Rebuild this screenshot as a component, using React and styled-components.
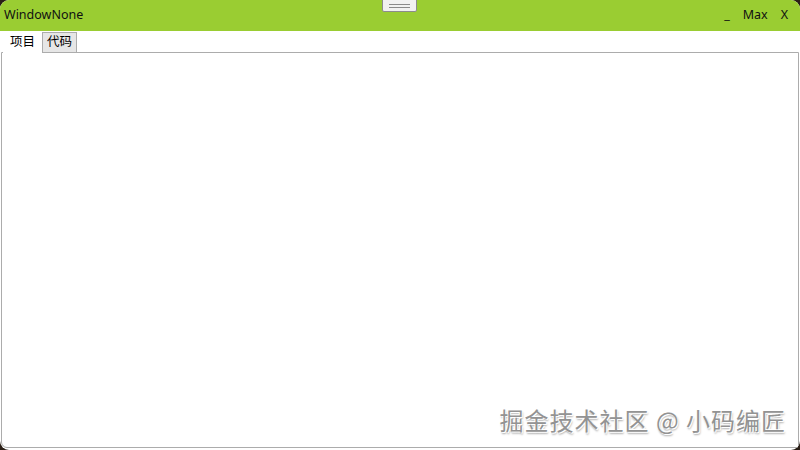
import React from 'react';
import styled, { createGlobalStyle } from 'styled-components';

const GlobalStyle = createGlobalStyle`
  html, body {
    margin: 0;
    padding: 0;
    background: #2a1f16;
  }
  #root {
    width: 800px;
    height: 450px;
  }
`;

const Window = styled.div`
  position: relative;
  width: 800px;
  height: 450px;
  box-sizing: border-box;
  background: #ffffff;
  border-radius: 9px;
  overflow: hidden;
  display: flex;
  flex-direction: column;
  font-family: "Segoe UI", "Noto Sans", "Noto Sans CJK SC", sans-serif;
`;

const TitleBar = styled.div`
  position: relative;
  height: 31px;
  flex: none;
  background: #9acd32;
  display: flex;
  align-items: center;
  padding: 0 12px 0 4px;
  color: #111;
  font-size: 12.5px;
`;

const Title = styled.div`
  flex: 1;
  padding-bottom: 2px;
`;

const Controls = styled.div`
  display: flex;
  gap: 13px;
  align-items: center;
  padding-bottom: 2px;
`;

const Control = styled.span`
  color: #111;
  font-size: 12.5px;
`;

const Handle = styled.div`
  position: absolute;
  top: -1px;
  left: 382px;
  width: 35px;
  height: 13px;
  box-sizing: border-box;
  background: #f1f1f1;
  border: 1px solid #8c8c8c;
  border-radius: 0 0 2px 2px;
  display: flex;
  flex-direction: column;
  justify-content: center;
  gap: 2px;
  padding: 0 6px;
`;

const HandleLine = styled.div`
  height: 1px;
  background: #8a8a8a;
`;

const Body = styled.div`
  flex: 1;
  display: flex;
  flex-direction: column;
  padding: 0 1px 2px 1px;
  min-height: 0;
`;

const TabStrip = styled.div`
  display: flex;
  align-items: flex-end;
  height: 21px;
  padding-left: 2px;
`;

const Tab = styled.div`
  box-sizing: border-box;
  height: ${p => (p.$active ? '21px' : '20px')};
  padding: 0 ${p => (p.$active ? '6px' : '4px')};
  background: ${p => (p.$active ? '#ffffff' : '#e6e6e6')};
  border: 1px solid ${p => (p.$active ? '#ffffff' : '#acacac')};
  border-bottom: none;
  font-size: 12.5px;
  line-height: 18px;
  color: #000;
  margin-bottom: ${p => (p.$active ? '-1px' : '0')};
  position: relative;
  z-index: ${p => (p.$active ? 1 : 0)};
`;

const Panel = styled.div`
  position: relative;
  flex: 1;
  border: 1px solid #acacac;
  background: #fff;
  border-radius: 0 0 0 6px;
`;

const Watermark = styled.div`
  position: absolute;
  right: 12px;
  bottom: 10px;
  font-size: 24px;
  letter-spacing: 1px;
  color: #939393;
  text-shadow: 1px 1px 0 #ffffff, -1px -1px 0 #ffffff, 1px 2px 2px rgba(0,0,0,0.35);
  font-family: "Noto Sans CJK SC", "Noto Sans", sans-serif;
`;

export default function App() {
  return (
    <>
      <GlobalStyle />
      <Window>
        <TitleBar>
          <Title>WindowNone</Title>
          <Handle>
            <HandleLine />
            <HandleLine />
          </Handle>
          <Controls>
            <Control>_</Control>
            <Control>Max</Control>
            <Control>X</Control>
          </Controls>
        </TitleBar>
        <Body>
          <TabStrip>
            <Tab $active>项目</Tab>
            <Tab>代码</Tab>
          </TabStrip>
          <Panel>
            <Watermark>掘金技术社区 @ 小码编匠</Watermark>
          </Panel>
        </Body>
      </Window>
    </>
  );
}
